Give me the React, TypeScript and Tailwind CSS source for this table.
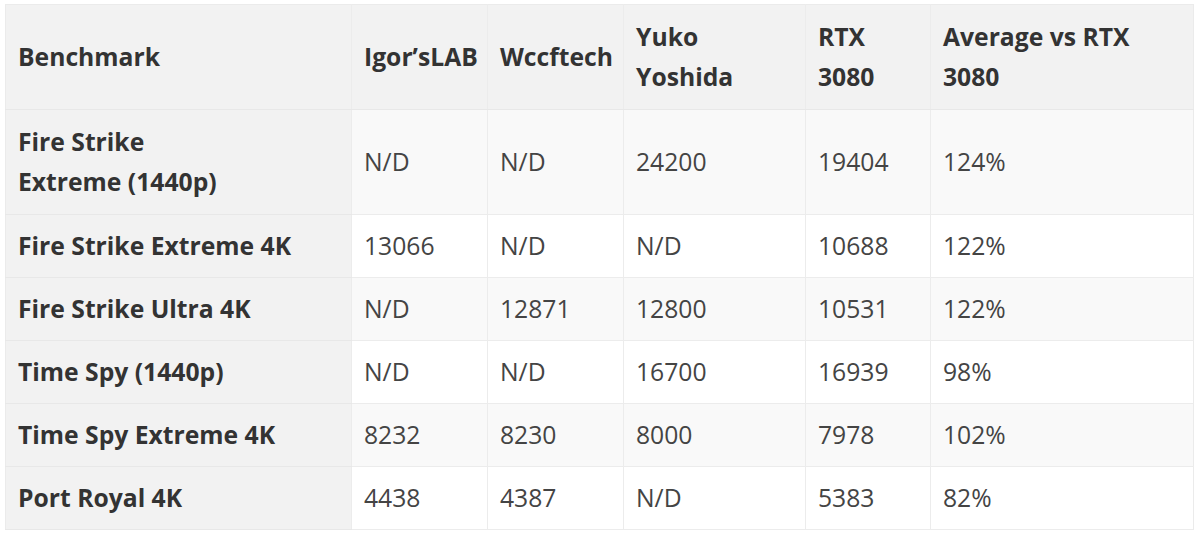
import { Fragment } from "react";

const rows = [
	["Fire Strike|Extreme (1440p)", "N/D", "N/D", "24200", "19404", "124%"],
	["Fire Strike Extreme 4K", "13066", "N/D", "N/D", "10688", "122%"],
	["Fire Strike Ultra 4K", "N/D", "12871", "12800", "10531", "122%"],
	["Time Spy (1440p)", "N/D", "N/D", "16700", "16939", "98%"],
	["Time Spy Extreme 4K", "8232", "8230", "8000", "7978", "102%"],
	["Port Royal 4K", "4438", "4387", "N/D", "5383", "82%"],
];

const headers = ["Benchmark", "Igor’sLAB", "Wccftech", "Yuko Yoshida", "RTX 3080", "Average vs RTX 3080"];
const widths = ["w-[346px]", "w-[136px]", "w-[136px]", "w-[182px]", "w-[125px]", "w-[263px]"];

// "|" marks a forced line break inside a cell
function Cell({ text }: { text: string }) {
	const parts = text.split("|");
	return (
		<>
			{parts.map((p, i) => (
				<Fragment key={i}>
					{i > 0 ? <br /> : null}
					{p}
				</Fragment>
			))}
		</>
	);
}

export default function App() {
	return (
		<div className="min-h-[536px] bg-white pl-[5px] pt-[4px] font-['Open_Sans',sans-serif]">
			<table className="w-[1188px] table-fixed border-collapse border border-[#ebebeb] text-[24.7px] leading-[40px] text-[#3a3a3a]">
				<colgroup>
					{widths.map((w, i) => (
						<col key={i} className={w} />
					))}
				</colgroup>
				<thead>
					<tr className="h-[105px] bg-[#f2f2f2]">
						{headers.map((h, i) => (
							<th
								key={h}
								className={
									"border-b border-[#e8e8e8] px-3 text-left align-middle font-bold text-[#333] " +
									(i > 0 ? "border-l border-l-[#ececec]" : "")
								}
							>
								{h}
							</th>
						))}
					</tr>
				</thead>
				<tbody>
					{rows.map((r, ri) => (
						<tr
							key={ri}
							className={(ri === 0 ? "h-[105px] " : "h-[63px] ") + (ri % 2 === 0 ? "bg-[#f9f9f9]" : "bg-white")}
						>
							{r.map((c, ci) => (
								<td
									key={ci}
									className={
										ci === 0
											? "border-b border-[#e8e8e8] bg-[#f2f2f2] px-3 font-bold text-[#333]"
											: "border-b border-l border-[#ececec] px-3 text-[#444]"
									}
								>
									<Cell text={c} />
								</td>
							))}
						</tr>
					))}
				</tbody>
			</table>
		</div>
	);
}
